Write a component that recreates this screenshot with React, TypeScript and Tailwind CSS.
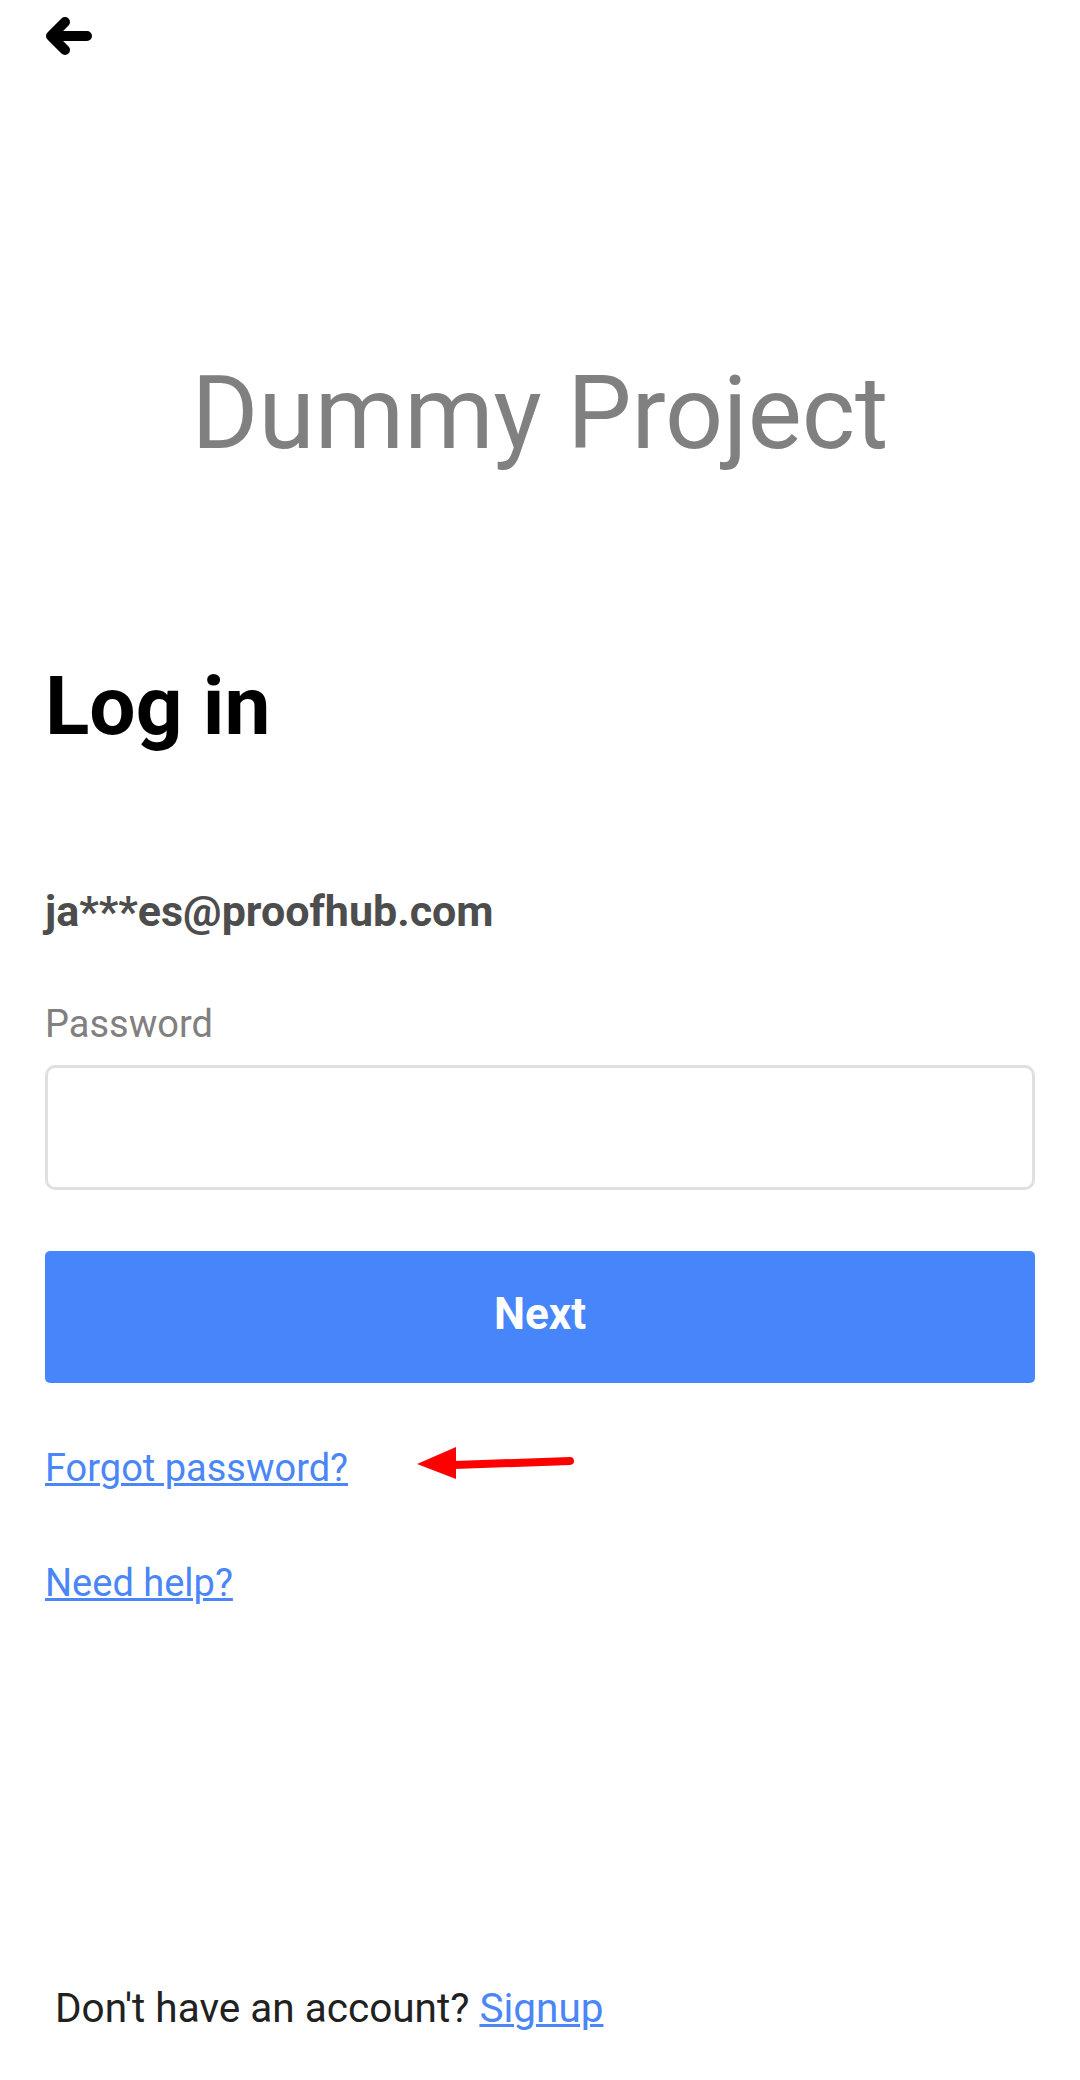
import React from "react";

function BackArrow() {
  return (
    <svg width="56" height="56" viewBox="40 8 56 56" className="block">
      <path
        d="M52 36 H87 M65 22 L51 36 L65 50"
        fill="none"
        stroke="#000"
        strokeWidth="10"
        strokeLinecap="round"
        strokeLinejoin="round"
      />
    </svg>
  );
}

function RedPointer() {
  return (
    <svg
      width="170"
      height="48"
      viewBox="0 0 170 48"
      className="absolute left-[365px] top-[-8px]"
    >
      <path d="M44 24 L160 20" stroke="#ff0000" strokeWidth="8" strokeLinecap="round" />
      <polygon points="7,23 46,6 46,38" fill="#ff0000" />
    </svg>
  );
}

export default function App() {
  return (
    <div className="min-h-[2080px] w-full bg-white flex flex-col font-['Roboto','Liberation_Sans',sans-serif]">
      <div className="pl-[40px] pt-[8px] h-[64px]">
        <button type="button" aria-label="Back" className="block">
          <BackArrow />
        </button>
      </div>

      <h2 className="mt-[298px] text-center text-[102px] leading-none font-normal text-[#808080]">
        Dummy Project
      </h2>

      <div className="px-[45px] flex flex-col">
        <h1 className="mt-[201px] text-[82px] leading-none font-bold text-black">Log in</h1>

        <p className="mt-[143px] text-[43px] leading-none font-bold text-[#4d4d4d]">
          ja***es@proofhub.com
        </p>

        <label className="mt-[72px] text-[38px] leading-none text-[#808080]">Password</label>
        <input
          type="password"
          className="mt-[22px] h-[125px] w-full rounded-[10px] border-[3px] border-[#e0e0e0] bg-white px-6 text-[40px] outline-none"
        />

        <button
          type="button"
          className="mt-[61px] h-[132px] w-full rounded-[5px] bg-[#4785fa] pb-[6px] text-[44px] leading-none font-bold text-white"
        >
          Next
        </button>

        <div className="relative mt-[66px] leading-none">
          <a className="text-[38px] leading-none text-[#4a86f7] underline decoration-[3px] underline-offset-[2px]">
            Forgot password?
          </a>
          <RedPointer />
        </div>

        <div className="mt-[77px] leading-none">
          <a className="text-[38px] leading-none text-[#4a86f7] underline decoration-[3px] underline-offset-[2px]">
            Need help?
          </a>
        </div>
      </div>

      <div className="mt-auto pb-[52px] pl-[55px] text-[40.5px] leading-none text-[#212121]">
        Don't have an account?{" "}
        <a className="text-[#4a86f7] underline decoration-[3px] underline-offset-[2px]">Signup</a>
      </div>
    </div>
  );
}
